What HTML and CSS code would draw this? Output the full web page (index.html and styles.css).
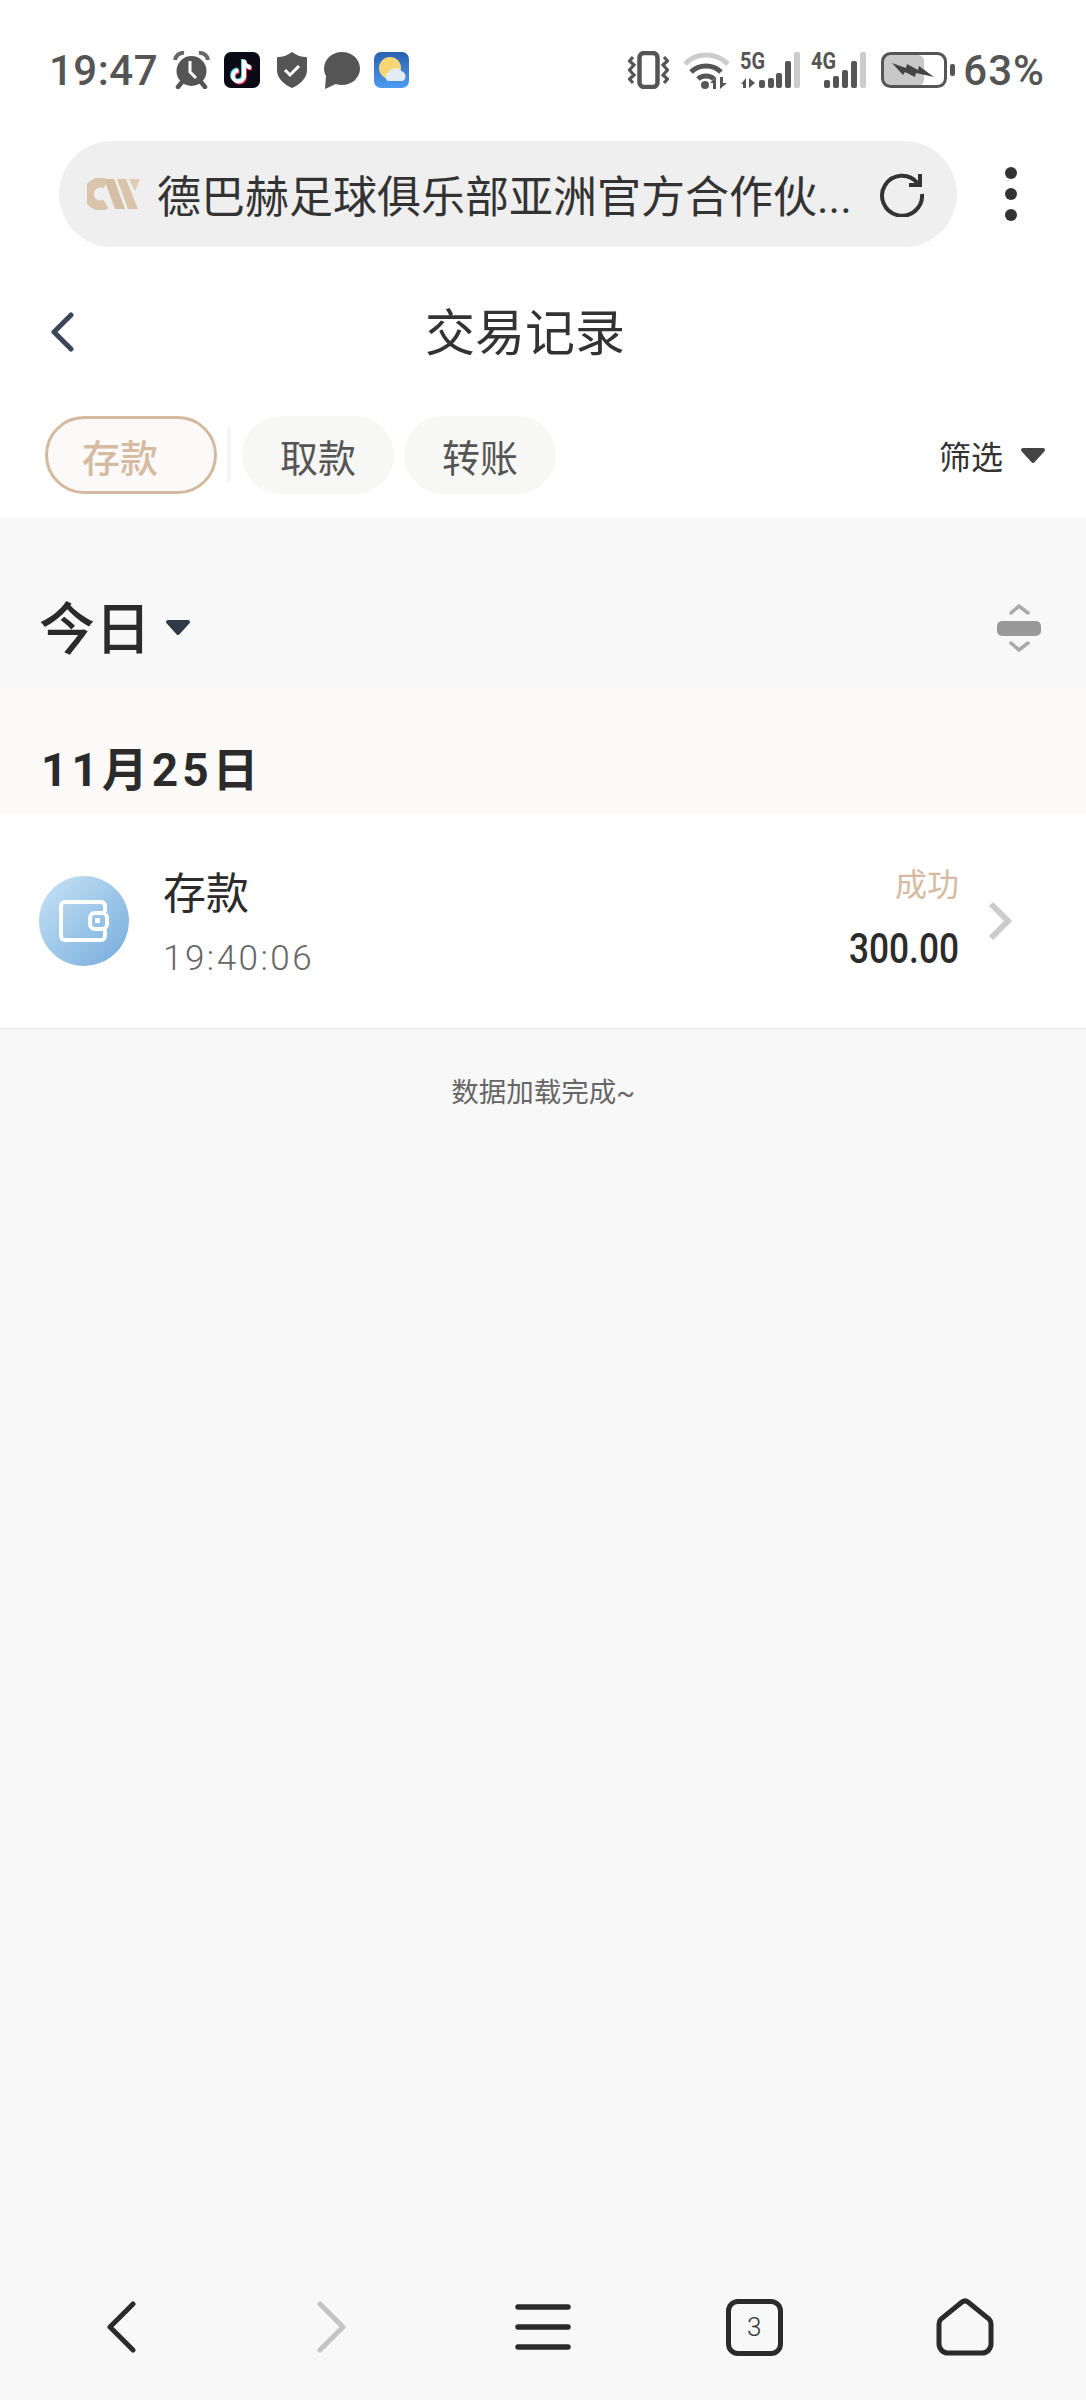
FILE: index.html
```html
<!DOCTYPE html>
<html lang="zh-CN">
<head>
    <meta charset="UTF-8">
    <meta name="viewport" content="width=device-width, initial-scale=1.0">
    <title>交易记录</title>
    <link rel="stylesheet" href="styles.css">
</head>
<body>
<div class="page">

    <div class="top-area">
        <div class="status-bar">
            <span class="clock">19:47</span>
            <svg class="st-alarm" width="37" height="38" viewBox="0 0 37 38">
                <circle cx="18.500" cy="20" r="15" fill="#555"/>
                <path d="M17 10V21L23 27" fill="none" stroke="#fff" stroke-width="3"/>
                <path d="M2 9A8 8 0 0 1 11 2M35 9A8 8 0 0 0 26 2" fill="none" stroke="#666" stroke-width="4"/>
                <path d="M9 31L5 36M28 31L32 36" fill="none" stroke="#555" stroke-width="4.500" stroke-linecap="round"/>
            </svg>
            <svg class="st-tiktok" width="36" height="36" viewBox="0 0 36 36">
                <rect width="36" height="36" rx="7" fill="#0a0a16"/>
                <path d="M19 7V23A5.500 5.500 0 1 1 13.500 17.500M19 7C19 11 22 14 26 14.500" fill="none" stroke="#3de2e6" stroke-width="4"/>
                <path d="M21 9V25A5.500 5.500 0 1 1 15.500 19.500M21 9C21 13 24 16 28 16.500" fill="none" stroke="#f0325a" stroke-width="4"/>
                <path d="M20 8V24A5.500 5.500 0 1 1 14.500 18.500M20 8C20 12 23 15 27 15.500" fill="none" stroke="#fff" stroke-width="4"/>
            </svg>
            <svg class="st-shield" width="30" height="36" viewBox="0 0 30 36">
                <path d="M15 0C19 3 24 5 29 5C30 5 30 6 30 7V18C30 27 22 33 15 36C8 33 0 27 0 18V7C0 6 0 5 1 5C6 5 11 3 15 0Z" fill="#555"/>
                <path d="M8 18L13 23L22 14" fill="none" stroke="#fff" stroke-width="3"/>
            </svg>
            <svg class="st-bubble" width="37" height="37" viewBox="0 0 37 37">
                <ellipse cx="19" cy="16.500" rx="18" ry="16.500" fill="#555"/>
                <path d="M3 24L2 37L15 31Z" fill="#555"/>
            </svg>
            <svg class="st-weather" width="35" height="36" viewBox="0 0 35 36">
                <defs>
                    <linearGradient id="skyFill" x1="0" y1="0" x2="0" y2="1">
                        <stop offset="0" stop-color="#2a5fb0"/>
                        <stop offset="1" stop-color="#4d9cf0"/>
                    </linearGradient>
                </defs>
                <rect width="35" height="36" rx="7" fill="url(#skyFill)"/>
                <circle cx="16" cy="16" r="11" fill="#f7d774"/>
                <path d="M14 29A5 5 0 0 1 15 20A7 7 0 0 1 27 19A5.500 5.500 0 0 1 29 29Z" fill="#e4ebf5"/>
            </svg>

            <div class="status-right">
                <svg class="st-vibrate" width="41" height="38" viewBox="0 0 41 38">
                    <rect x="11.500" y="2" width="18" height="34" rx="4.500" fill="none" stroke="#555" stroke-width="4.500"/>
                    <path d="M5 6L1.500 10L6 14L1.500 19L6 24L1.500 28L5 32M36 6L39.500 10L35 14L39.500 19L35 24L39.500 28L36 32" fill="none" stroke="#555" stroke-width="3.200"/>
                </svg>
                <svg class="st-wifi" width="47" height="38" viewBox="0 0 47 38">
                    <path d="M2 13C13 1 33 1 45 13" fill="none" stroke="#ccc" stroke-width="5"/>
                    <path d="M8 21C16 13 30 13 38 21" fill="none" stroke="#555" stroke-width="5"/>
                    <path d="M15 28C19 24 27 24 31 28" fill="none" stroke="#555" stroke-width="5"/>
                    <circle cx="22" cy="34" r="4" fill="#555"/>
                    <path d="M30 38V32L27 32L33 26V38ZM37 26V38L44 32H40V26Z" fill="#555"/>
                </svg>
                <svg class="st-signal" width="61" height="50" viewBox="0 -6 61 50">
                    <text x="0" y="18" class="net-label" textLength="25" lengthAdjust="spacingAndGlyphs">5G</text>
                    <path d="M1 33L6 27V37H3V33ZM9 27L15 32L9 37Z" fill="#555"/>
                    <rect x="19" y="29" width="6" height="8" rx="2" fill="#555"/>
                    <rect x="28" y="27" width="6" height="10" rx="2" fill="#555"/>
                    <rect x="36" y="22" width="6" height="15" rx="2" fill="#555"/>
                    <rect x="45" y="10" width="6" height="27" rx="2" fill="#555"/>
                    <rect x="54" y="1" width="6" height="36" rx="2" fill="#ccc"/>
                </svg>
                <svg class="st-signal" width="56" height="50" viewBox="0 -6 56 50">
                    <text x="0" y="18" class="net-label" textLength="25" lengthAdjust="spacingAndGlyphs">4G</text>
                    <rect x="13" y="29" width="6" height="8" rx="2" fill="#555"/>
                    <rect x="22" y="25" width="6" height="12" rx="2" fill="#555"/>
                    <rect x="31" y="19" width="6" height="18" rx="2" fill="#555"/>
                    <rect x="40" y="10" width="6" height="27" rx="2" fill="#555"/>
                    <rect x="49" y="1" width="6" height="36" rx="2" fill="#ccc"/>
                </svg>
                <svg class="st-battery" width="74" height="38" viewBox="0 0 74 38">
                    <rect x="2" y="4" width="41" height="31" rx="6" fill="#c8c8c8"/>
                    <rect x="1.500" y="2.500" width="63" height="33" rx="8" fill="none" stroke="#555" stroke-width="3"/>
                    <path d="M11 12L25 17L26 13L37 19L38 15L53 26L35 22L34 26L24 21L22 24Z" fill="#444"/>
                    <rect x="69" y="13" width="5" height="12" rx="2" fill="#555"/>
                </svg>
                <span class="battery-text">63%</span>
            </div>
        </div>

        <div class="url-row">
            <div class="url-bar">
                <svg class="url-logo" width="53" height="32" viewBox="0 0 53 32">
                    <path d="M19 6A11.500 11.500 0 1 0 19 26" fill="none" stroke="#dac4ac" stroke-width="10"/>
                    <path d="M17 1H27L38 31H28Z" fill="#d5bea6"/>
                    <path d="M30 1H39L51 31H41Z" fill="#dac4ac"/>
                    <path d="M42 1H53L48 13Z" fill="#dfccb8"/>
                </svg>
                <span class="url-text">德巴赫足球俱乐部亚洲官方合作伙...</span>
                <svg class="url-reload" width="46" height="46" viewBox="0 0 46 46">
                    <path d="M38.500 12A20 20 0 1 0 43 23" fill="none" stroke="#333" stroke-width="4"/>
                    <path d="M41 3V14H30" fill="none" stroke="#333" stroke-width="4"/>
                </svg>
            </div>
            <div class="kebab"><i></i><i></i><i></i></div>
        </div>
    </div>

    <div class="title-bar">
        <svg class="title-back" width="24" height="40" viewBox="0 0 24 40">
            <path d="M21 3L4 20L21 37" fill="none" stroke="#3c4658" stroke-width="5" stroke-linecap="round" stroke-linejoin="round"/>
        </svg>
        <h1 class="title">交易记录</h1>
    </div>

    <div class="tabs">
        <span class="tab tab-active">存款</span>
        <span class="tab-sep"></span>
        <span class="tab">取款</span>
        <span class="tab tab-last">转账</span>
        <span class="filter">筛选
            <svg class="caret-filter" width="26" height="17" viewBox="0 0 26 17">
                <path d="M3 3H23L13 14Z" fill="#444" stroke="#444" stroke-width="4" stroke-linejoin="round"/>
            </svg>
        </span>
    </div>

    <div class="period">
        <span class="period-label">今日</span>
        <svg class="caret-period" width="26" height="17" viewBox="0 0 26 17">
            <path d="M3 3H23L13 14Z" fill="#2f3a47" stroke="#2f3a47" stroke-width="4" stroke-linejoin="round"/>
        </svg>
        <svg class="period-sort" width="46" height="50" viewBox="0 0 46 50">
            <path d="M15 10L23 3L32 10M15 40L23 47L32 40" fill="none" stroke="#aaa" stroke-width="3.500" stroke-linecap="round"/>
            <rect x="1" y="18" width="44" height="15" rx="5" fill="#999"/>
        </svg>
    </div>

    <div class="date-band">11月25日</div>

    <div class="record">
        <div class="record-icon">
            <svg width="50" height="42" viewBox="0 0 50 42">
                <path d="M46 12V6A4 4 0 0 0 42 2H6A4 4 0 0 0 2 6V36A4 4 0 0 0 6 40H42A4 4 0 0 0 46 36V30" fill="none" stroke="#fff" stroke-width="4"/>
                <rect x="31" y="13" width="17" height="16" rx="5" fill="none" stroke="#fff" stroke-width="4"/>
                <rect x="36" y="18" width="5" height="5" fill="#fff"/>
            </svg>
        </div>
        <div class="record-info">
            <div class="record-name">存款</div>
            <div class="record-time">19:40:06</div>
        </div>
        <div class="record-side">
            <div class="record-state">成功</div>
            <div class="record-amount">300.00</div>
        </div>
        <svg class="record-arrow" width="24" height="40" viewBox="0 0 24 40">
            <path d="M3 3L20 20L3 37" fill="none" stroke="#ccc" stroke-width="6"/>
        </svg>
    </div>

    <p class="loaded">数据加载完成~</p>

    <div class="browser-nav">
        <span class="nav-item">
            <svg width="30" height="52" viewBox="0 0 30 52">
                <path d="M27 3L4 26L27 49" fill="none" stroke="#2b2b2b" stroke-width="5" stroke-linecap="round" stroke-linejoin="round"/>
            </svg>
        </span>
        <span class="nav-item">
            <svg width="30" height="52" viewBox="0 0 30 52">
                <path d="M3 3L26 26L3 49" fill="none" stroke="#c4c4c4" stroke-width="5" stroke-linecap="round" stroke-linejoin="round"/>
            </svg>
        </span>
        <span class="nav-item">
            <svg width="56" height="46" viewBox="0 0 56 46">
                <path d="M3 3H53M3 23H53M3 43H53" fill="none" stroke="#2b2b2b" stroke-width="5.500" stroke-linecap="round"/>
            </svg>
        </span>
        <span class="nav-item"><span class="tab-count">3</span></span>
        <span class="nav-item">
            <svg width="58" height="58" viewBox="0 0 58 58">
                <path d="M26 4L5 21A7 7 0 0 0 3 26V46A9 9 0 0 0 12 55H46A9 9 0 0 0 55 46V26A7 7 0 0 0 53 21L32 4A5 5 0 0 0 26 4Z" fill="none" stroke="#2b2b2b" stroke-width="5"/>
            </svg>
        </span>
    </div>

</div>
</body>
</html>
```

FILE: styles.css
```css
* {
    box-sizing: border-box;
}
body {
    margin: 0;
    background: #f8f8f8;
    font-family: Roboto, "Noto Sans CJK SC", sans-serif;
    color: #333;
}
svg {
    display: block;
    flex: none;
}
i {
    display: block;
}
.page {
    width: 1086px;
    height: 2400px;
    display: flex;
    flex-direction: column;
}

/* phone status bar and browser url bar */
.top-area {
    background: #fff;
}
.status-bar {
    height: 138px;
    padding: 2px 41px 0 49px;
    display: flex;
    align-items: center;
    color: #555;
}
.clock {
    width: 108px;
    font-size: 42px;
    font-weight: 500;
    letter-spacing: 0.5px;
    white-space: nowrap;
}
.st-alarm {
    margin-left: 16px;
}
.st-tiktok {
    margin-left: 14px;
}
.st-shield {
    margin-left: 17px;
}
.st-bubble {
    margin-left: 16px;
}
.st-weather {
    margin-left: 14px;
}
.status-right {
    margin-left: auto;
    display: flex;
    align-items: center;
}
.st-wifi {
    margin-left: 14px;
}
.st-signal {
    margin-left: 10px;
}
.st-battery {
    margin-left: 14px;
}
.net-label {
    font-family: Roboto, sans-serif;
    font-size: 24px;
    font-weight: 700;
    fill: #555;
}
.battery-text {
    margin-left: 8px;
    font-size: 42px;
    font-weight: 500;
    letter-spacing: 1px;
}
.url-row {
    height: 109px;
    padding: 3px 0 0 59px;
    display: flex;
}
.url-bar {
    width: 898px;
    height: 106px;
    border-radius: 53px;
    background: #efefef;
    padding: 0 32px 0 28px;
    display: flex;
    align-items: center;
}
.url-text {
    margin-left: 17px;
    font-size: 44px;
    color: #333;
    white-space: nowrap;
}
.url-reload {
    margin-left: auto;
}
.kebab {
    width: 108px;
    height: 106px;
    display: flex;
    flex-direction: column;
    align-items: center;
    justify-content: center;
    gap: 9px;
}
.kebab i {
    width: 12px;
    height: 12px;
    border-radius: 50%;
    background: #333;
}

/* page header */
.title-bar {
    height: 160px;
    padding: 10px 0 0 50px;
    background: #fff;
    display: flex;
    align-items: center;
}
.title {
    margin: 0 0 0 351px;
    padding-bottom: 6px;
    font-size: 50px;
    font-weight: 400;
    color: #333;
}

.tabs {
    height: 111px;
    padding: 9px 40px 24px 45px;
    background: #fff;
    display: flex;
    align-items: center;
}
.tab {
    width: 152px;
    height: 78px;
    margin-left: 10px;
    border-radius: 39px;
    background: #f7f7f5;
    font-size: 38px;
    color: #555;
    display: flex;
    align-items: center;
    justify-content: center;
}
.tab-active {
    width: 172px;
    margin-left: 0;
    padding-right: 22px;
    border: 3px solid #d4b99f;
    background: #fcfaf8;
    font-weight: 500;
    color: #d5bba1;
}
.tab-sep {
    width: 4px;
    height: 55px;
    margin-left: 10px;
    background: #f5f5f5;
}
.tab-sep + .tab {
    margin-left: 11px;
}
.filter {
    margin-left: auto;
    font-size: 32px;
    color: #333;
    display: flex;
    align-items: center;
}
.caret-filter {
    margin-left: 17px;
}
.caret-period {
    margin-left: 14px;
}

.period {
    height: 171px;
    padding: 48px 44px 0 39px;
    display: flex;
    align-items: center;
}
.period-label {
    padding-bottom: 6px;
    font-size: 56px;
    font-weight: 500;
    color: #2b2b2b;
}
.period-sort {
    margin-left: auto;
}

.date-band {
    height: 125px;
    padding: 29px 0 0 41px;
    background: #fbfaf8;
    font-size: 46px;
    font-weight: 700;
    letter-spacing: 4px;
    color: #2b2b2b;
    display: flex;
    align-items: center;
}

.record {
    height: 215px;
    padding: 0 0 0 39px;
    background: #fff;
    border-bottom: 1px solid #ececec;
    display: flex;
    align-items: center;
}
.record-icon {
    width: 90px;
    height: 90px;
    border-radius: 50%;
    background: linear-gradient(135deg, #c9e4f6, #74abdc);
    display: flex;
    align-items: center;
    justify-content: center;
}
.record-info {
    margin-left: 34px;
    padding-top: 3px;
}
.record-name {
    font-size: 43px;
    line-height: 56px;
    color: #2b2b2b;
}
.record-time {
    margin-top: 16px;
    font-size: 35px;
    font-weight: 300;
    line-height: 42px;
    letter-spacing: 2.5px;
    color: #666;
}
.record-side {
    margin-left: auto;
    padding-bottom: 5px;
    text-align: right;
}
.record-state {
    font-size: 32px;
    line-height: 44px;
    color: #d5bba1;
}
.record-amount {
    margin-top: 17px;
    font-size: 42px;
    font-weight: 500;
    line-height: 50px;
    color: #2b2b2b;
    transform: scaleX(0.84);
    transform-origin: right center;
}
.record-arrow {
    margin: 0 74px 0 29px;
}

.loaded {
    margin: 46px 0 0;
    font-size: 27.5px;
    line-height: 36px;
    text-align: center;
    color: #666;
}

/* browser toolbar */
.browser-nav {
    margin-top: auto;
    height: 146px;
    padding: 0 15px;
    display: grid;
    grid-template-columns: repeat(5, 1fr);
}
.nav-item {
    display: flex;
    align-items: center;
    justify-content: center;
}
.tab-count {
    width: 57px;
    height: 57px;
    border: 5px solid #2b2b2b;
    border-radius: 12px;
    font-size: 26px;
    font-weight: 300;
    display: flex;
    align-items: center;
    justify-content: center;
}
```
